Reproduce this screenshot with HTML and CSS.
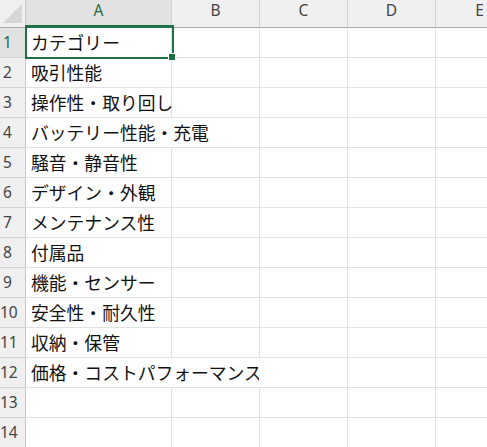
FILE: index.html
```html
<!DOCTYPE html>
<html lang="ja">
<head>
  <meta charset="UTF-8" />
  <title>Book1 - Excel</title>
  <link rel="stylesheet" href="styles.css">
</head>
<body>
  <div class="sheet">
    <div class="row head">
      <div class="corner">
        <svg width="26" height="28" viewBox="0 0 26 28"><polygon points="22,4 22,23 3,23" fill="#d6d6d6"/></svg>
      </div>
      <div class="colhdr col-a selected">A</div>
      <div class="colhdr col-n">B</div>
      <div class="colhdr col-n">C</div>
      <div class="colhdr col-n">D</div>
      <div class="colhdr col-n">E</div>
    </div>

    <div class="row">
      <div class="rowhdr selected">1</div>
      <div class="cell col-a active">カテゴリー<span class="sel"></span><span class="handle"></span></div>
      <div class="cell col-n"></div><div class="cell col-n"></div><div class="cell col-n"></div><div class="cell col-n"></div>
    </div>
    <div class="row">
      <div class="rowhdr">2</div>
      <div class="cell col-a">吸引性能</div>
      <div class="cell col-n"></div><div class="cell col-n"></div><div class="cell col-n"></div><div class="cell col-n"></div>
    </div>
    <div class="row">
      <div class="rowhdr">3</div>
      <div class="cell col-a">操作性・取り回し</div>
      <div class="cell col-n"></div><div class="cell col-n"></div><div class="cell col-n"></div><div class="cell col-n"></div>
    </div>
    <div class="row">
      <div class="rowhdr">4</div>
      <div class="cell col-a spill">バッテリー性能・充電</div>
      <div class="cell col-n"></div><div class="cell col-n"></div><div class="cell col-n"></div><div class="cell col-n"></div>
    </div>
    <div class="row">
      <div class="rowhdr">5</div>
      <div class="cell col-a">騒音・静音性</div>
      <div class="cell col-n"></div><div class="cell col-n"></div><div class="cell col-n"></div><div class="cell col-n"></div>
    </div>
    <div class="row">
      <div class="rowhdr">6</div>
      <div class="cell col-a">デザイン・外観</div>
      <div class="cell col-n"></div><div class="cell col-n"></div><div class="cell col-n"></div><div class="cell col-n"></div>
    </div>
    <div class="row">
      <div class="rowhdr">7</div>
      <div class="cell col-a">メンテナンス性</div>
      <div class="cell col-n"></div><div class="cell col-n"></div><div class="cell col-n"></div><div class="cell col-n"></div>
    </div>
    <div class="row">
      <div class="rowhdr">8</div>
      <div class="cell col-a">付属品</div>
      <div class="cell col-n"></div><div class="cell col-n"></div><div class="cell col-n"></div><div class="cell col-n"></div>
    </div>
    <div class="row">
      <div class="rowhdr">9</div>
      <div class="cell col-a">機能・センサー</div>
      <div class="cell col-n"></div><div class="cell col-n"></div><div class="cell col-n"></div><div class="cell col-n"></div>
    </div>
    <div class="row">
      <div class="rowhdr">10</div>
      <div class="cell col-a">安全性・耐久性</div>
      <div class="cell col-n"></div><div class="cell col-n"></div><div class="cell col-n"></div><div class="cell col-n"></div>
    </div>
    <div class="row">
      <div class="rowhdr">11</div>
      <div class="cell col-a">収納・保管</div>
      <div class="cell col-n"></div><div class="cell col-n"></div><div class="cell col-n"></div><div class="cell col-n"></div>
    </div>
    <div class="row">
      <div class="rowhdr">12</div>
      <div class="cell col-a spill">価格・コストパフォーマンス</div>
      <div class="cell col-n spill"></div><div class="cell col-n"></div><div class="cell col-n"></div><div class="cell col-n"></div>
    </div>
    <div class="row">
      <div class="rowhdr">13</div>
      <div class="cell col-a"></div>
      <div class="cell col-n"></div><div class="cell col-n"></div><div class="cell col-n"></div><div class="cell col-n"></div>
    </div>
    <div class="row">
      <div class="rowhdr">14</div>
      <div class="cell col-a"></div>
      <div class="cell col-n"></div><div class="cell col-n"></div><div class="cell col-n"></div><div class="cell col-n"></div>
    </div>
  </div>
</body>
</html>
```

FILE: styles.css
```css
html, body {
  margin: 0;
  padding: 0;
  background-color: #fff;
  overflow: hidden;
}

.sheet {
  width: 487px;
  height: 447px;
  overflow: hidden;
}

.row {
  display: flex;
  height: 30px;
}

.row.head {
  height: 28px;
}

/* column widths */
.corner, .rowhdr {
  width: 26px;
  flex: none;
}

.col-a {
  width: 146px;
  flex: none;
}

.col-n {
  width: 88px;
  flex: none;
}

/* headers */
.corner {
  background-color: #f0f0f0;
  border-right: 1px solid #c9c9c9;
  border-bottom: 1px solid #ababab;
  box-sizing: border-box;
}

.corner svg {
  display: block;
}

.colhdr {
  box-sizing: border-box;
  background-color: #f0f0f0;
  border-right: 1px solid #d5d5d5;
  border-bottom: 1px solid #ababab;
  font-family: "Noto Sans", sans-serif;
  font-size: 15.5px;
  color: #444;
  text-align: center;
  line-height: 21px;
}

.colhdr.selected {
  background-color: #e1e1e1;
  color: #1e6e42;
  border-bottom: 2px solid #1e7145;
}

.rowhdr {
  box-sizing: border-box;
  background-color: #f0f0f0;
  border-right: 1px solid #c9c9c9;
  border-bottom: 1px solid #d5d5d5;
  font-family: "Noto Sans", sans-serif;
  font-size: 15.5px;
  color: #444;
  text-align: center;
  padding-right: 10px;
  line-height: 29px;
  white-space: nowrap;
}

.rowhdr.selected {
  background-color: #e1e1e1;
  color: #1e6e42;
}

/* cells */
.cell {
  box-sizing: border-box;
  position: relative;
  border-right: 1px solid #e1e1e1;
  border-bottom: 1px solid #e1e1e1;
  font-family: "Noto Sans CJK JP", "Noto Sans", sans-serif;
  font-size: 17.8px;
  color: #111;
  padding-left: 5px;
  line-height: 29px;
  white-space: nowrap;
}

.cell.spill {
  border-right-color: #fff;
}

.sel {
  position: absolute;
  left: -1px;
  top: -3px;
  width: 149px;
  height: 34px;
  box-sizing: border-box;
  border: 2px solid #1e7145;
  z-index: 2;
}

.handle {
  position: absolute;
  left: 143px;
  top: 26px;
  width: 6px;
  height: 6px;
  background-color: #1e7145;
  box-shadow: 0 0 0 1px #fff;
  z-index: 3;
}
```
